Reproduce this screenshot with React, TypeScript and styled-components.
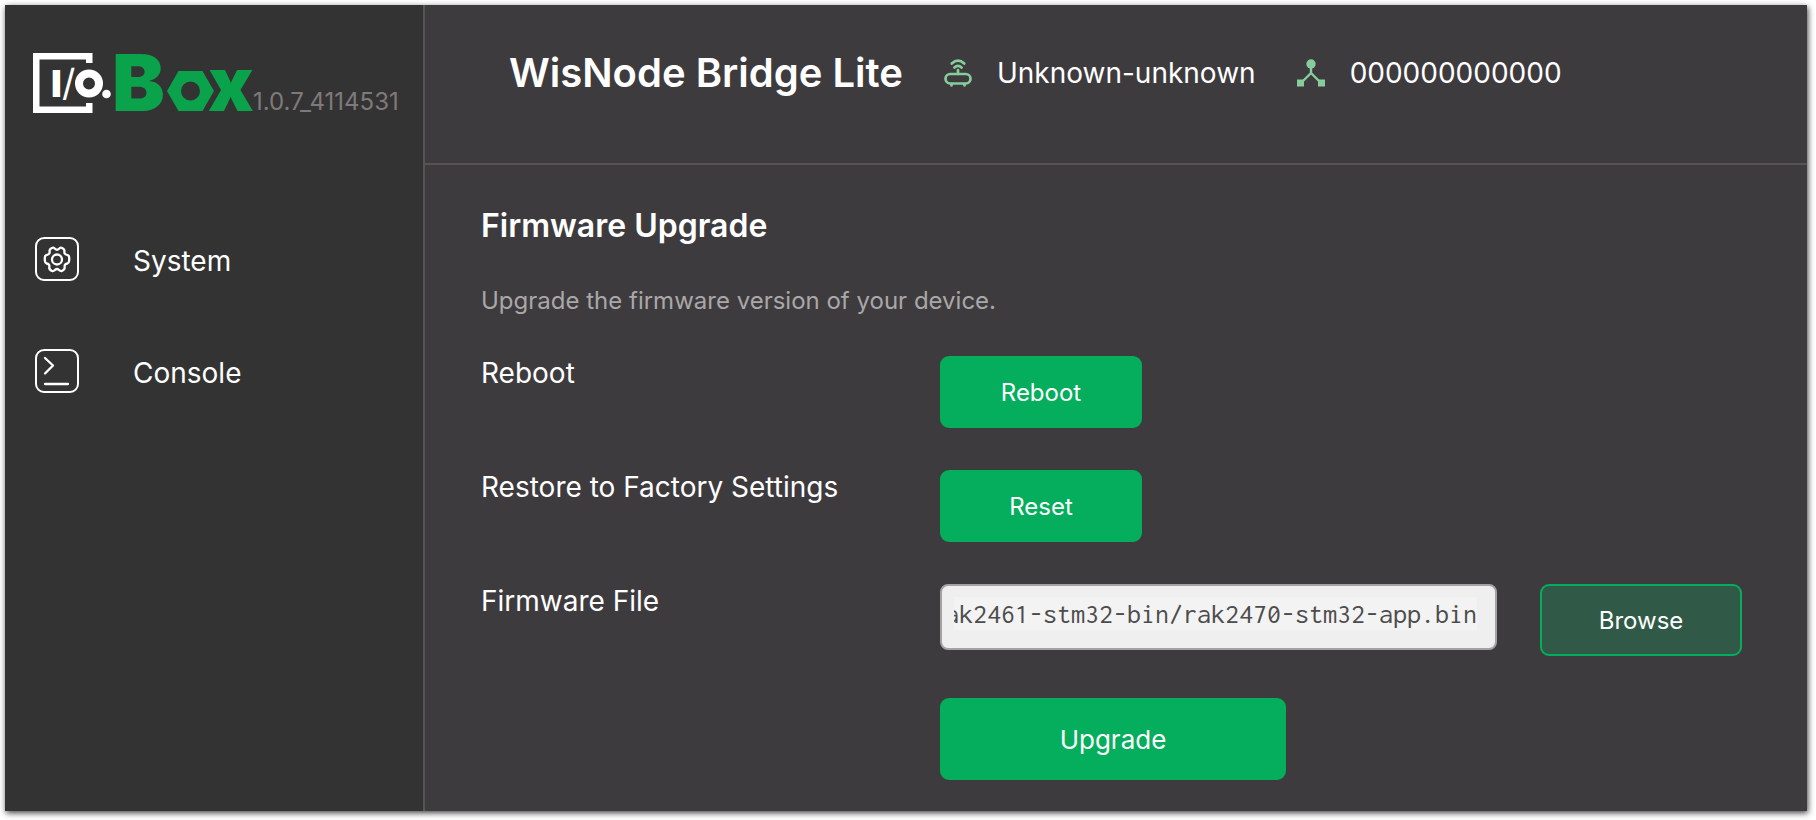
import React, { useLayoutEffect, useRef, useState } from "react";
import styled, { createGlobalStyle } from "styled-components";

const GlobalStyle = createGlobalStyle`
  * { box-sizing: border-box; }
  body {
    margin: 0;
    background: #fff;
    font-family: Inter, "Liberation Sans", sans-serif;
    color: #fff;
  }
`;

const Page = styled.div`
  display: flex;
  min-height: 100vh;
  padding: 5px 9px 9px 5px;
`;

const Frame = styled.div`
  display: flex;
  flex: 1;
  min-width: 0;
  background: #3e3b3e;
  box-shadow: 1px 2px 6px rgba(0, 0, 0, 0.75);
`;

const Sidebar = styled.aside`
  flex: 0 0 420px;
  background: #333;
  border-right: 2px solid #585454;
`;

const Brand = styled.div`
  display: flex;
  align-items: flex-end;
  height: 108px;
  padding-left: 28px;
`;

const Version = styled.span`
  font-size: 24px;
  line-height: 22px;
  color: #7f7a7a;
`;

const Nav = styled.nav`
  display: flex;
  flex-direction: column;
  gap: 68px;
  padding: 124px 30px 0;
`;

const NavLink = styled.a`
  display: flex;
  align-items: center;
  gap: 54px;
  height: 44px;
  font-size: 28px;
  line-height: 40px;
  color: #fff;
  text-decoration: none;
`;

const NavText = styled.span`
  padding-top: 4px;
`;

const Main = styled.main`
  flex: 1;
  min-width: 0;
`;

const Header = styled.header`
  display: flex;
  align-items: flex-start;
  gap: 41px;
  height: 160px;
  padding: 44px 84px 0;
  border-bottom: 2px solid #585453;
`;

const Title = styled.h1`
  margin: 0;
  font-size: 40px;
  line-height: 48px;
  font-weight: 600;
`;

const Info = styled.div`
  display: flex;
  align-items: center;
  gap: 25px;
  font-size: 28px;
  line-height: 48px;
`;

const Content = styled.section`
  padding: 41px 56px 30px;
`;

const Heading = styled.h2`
  margin: 0;
  font-size: 32px;
  line-height: 40px;
  font-weight: 600;
`;

const Description = styled.p`
  margin: 40px 0;
  font-size: 24px;
  line-height: 30px;
  color: #a9a7a8;
`;

const Form = styled.form`
  display: grid;
  grid-template-columns: 459px 1fr;
  row-gap: 42px;
`;

const Label = styled.label`
  font-size: 28px;
  line-height: 34px;
`;

const Field = styled.div`
  grid-column: 2;
  display: flex;
  align-items: flex-start;
  gap: 43px;
`;

const Button = styled.button<{ $outlined?: boolean; $large?: boolean }>`
  width: ${(p) => (p.$large ? 346 : 202)}px;
  height: ${(p) => (p.$large ? 82 : 72)}px;
  padding: 0;
  border: 2px solid #04ae5c;
  border-radius: 9px;
  background: ${(p) => (p.$outlined ? "#305a47" : "#04ae5c")};
  color: #fff;
  font-family: inherit;
  font-size: ${(p) => (p.$large ? 26 : 24)}px;
  cursor: pointer;
`;

const FileInput = styled.input`
  width: 557px;
  height: 66px;
  padding: 11px 18px 18px 12px;
  border: 2px solid #a5a2a4;
  border-radius: 8px;
  background: linear-gradient(#f3f3f3, #f3f3f3) content-box, #efefef;
  color: #4c4c4c;
  font-family: Inconsolata, "Noto Sans Mono CJK SC", "DejaVu Sans Mono", monospace;
  font-size: 28px;
`;

const Logo = () => (
  <svg width="220" height="60" viewBox="33 53 220 60" role="img" aria-label="I/O Box" overflow="visible">
    <path d="M92.5 53H33V113H92.5V103H86V106.500H39.500V59.500H86V63H92.500Z" fill="#fff" />
    <g fill="#fff" fontFamily="Inter, sans-serif" fontSize="37">
      <text x="51" y="97" fontWeight="900">I</text>
      <text x="62" y="96" fontWeight="400">/</text>
    </g>
    <circle cx="89" cy="83.500" r="10" fill="none" stroke="#fff" strokeWidth="8" />
    <circle cx="106.5" cy="94" r="4.300" fill="#fff" />
    <g fill="#0aa34c" fontFamily="Inter, sans-serif" fontWeight="900">
      <text x="112" y="111" fontSize="79">B</text>
      <path
        fillRule="evenodd"
        d="M178.500 71H202.500L214 91L202.500 111H178.500L167 91ZM190.500 81.500a9.500 9.500 0 1 0 0 19a9.500 9.500 0 1 0 0-19Z"
      />
      <text x="208" y="111" fontSize="75">x</text>
    </g>
  </svg>
);

const GearIcon = () => (
  <svg width="44" height="44" viewBox="0 0 44 44" fill="none" stroke="#fff" strokeWidth="2" strokeLinejoin="round" aria-hidden="true">
    <rect x="1" y="1" width="42" height="42" rx="8" />
    <circle cx="22" cy="22.500" r="5" strokeWidth="2.300" />
    <path
      strokeWidth="2.300"
      d="M17.500 10.800Q19 10.300 20 11.800Q22 13.800 24 11.800Q25 10.300 26.500 10.800Q29.500 12 29.500 14Q28.800 17.500 32 17.800Q34 18 34.200 20.500V23.500Q34 26 32.500 26.500Q29 27 29.700 30.500Q30 32.500 27 34Q25.500 34.500 24 33Q22 31 20 33Q18.500 34.500 17 34Q14 32.500 14.300 30.500Q15 27 11.500 26.500Q10 26 9.800 23.500V20.500Q10 18 12 17.800Q15.200 17.500 14.500 14Q14.500 12 17.500 10.800Z"
    />
  </svg>
);

const ConsoleIcon = () => (
  <svg width="44" height="44" viewBox="0 0 44 44" fill="none" stroke="#fff" strokeWidth="2" strokeLinecap="round" strokeLinejoin="round" aria-hidden="true">
    <rect x="1" y="1" width="42" height="42" rx="8" />
    <path d="M10 9L18 16.500L10 24.500M10 35H33" strokeWidth="2.300" />
  </svg>
);

const RouterIcon = () => (
  <svg width="28" height="28" viewBox="0 0 28 28" fill="none" stroke="#87cc9c" strokeWidth="2.700" strokeLinecap="round" aria-hidden="true">
    <rect x="1.500" y="15" width="25" height="9.500" rx="4.700" />
    <path d="M14 11V15M7.500 25V26.500M20.500 25V26.500" />
    <path d="M7.800 4.500Q14-1.200 20.200 4.500M10.500 8.500Q14 5.300 17.500 8.500" />
  </svg>
);

const HubIcon = () => (
  <svg width="28" height="28" viewBox="0 0 28 28" fill="#87cc9c" aria-hidden="true">
    <circle cx="14" cy="5" r="4.700" />
    <path d="M0 20.500H7V27.500H0ZM21 20.500H28V27.500H21Z" />
    <path d="M14 8V14L5 23M14 14L23 23" fill="none" stroke="#87cc9c" strokeWidth="2.400" />
  </svg>
);

export default function App() {
  const [file, setFile] = useState("rak2461-stm32-bin/rak2470-stm32-app.bin");
  const input = useRef<HTMLInputElement>(null);

  // Keep the end of a long path in view.
  useLayoutEffect(() => {
    if (input.current) input.current.scrollLeft = input.current.scrollWidth;
  }, [file]);

  return (
    <>
      <GlobalStyle />
      <Page>
        <Frame>
          <Sidebar>
            <Brand>
              <Logo />
              <Version>1.0.7_4114531</Version>
            </Brand>
            <Nav>
              <NavLink href="#system"><GearIcon /><NavText>System</NavText></NavLink>
              <NavLink href="#console"><ConsoleIcon /><NavText>Console</NavText></NavLink>
            </Nav>
          </Sidebar>
          <Main>
            <Header>
              <Title>WisNode Bridge Lite</Title>
              <Info><RouterIcon />Unknown-unknown</Info>
              <Info><HubIcon />000000000000</Info>
            </Header>
            <Content>
              <Heading>Firmware Upgrade</Heading>
              <Description>Upgrade the firmware version of your device.</Description>
              <Form>
                <Label htmlFor="reboot">Reboot</Label>
                <Field><Button id="reboot" type="button">Reboot</Button></Field>
                <Label htmlFor="reset">Restore to Factory Settings</Label>
                <Field><Button id="reset" type="button">Reset</Button></Field>
                <Label htmlFor="file">Firmware File</Label>
                <Field>
                  <FileInput id="file" ref={input} value={file} onChange={(e) => setFile(e.target.value)} />
                  <Button type="button" $outlined>Browse</Button>
                </Field>
                <Field><Button type="button" $large>Upgrade</Button></Field>
              </Form>
            </Content>
          </Main>
        </Frame>
      </Page>
    </>
  );
}
